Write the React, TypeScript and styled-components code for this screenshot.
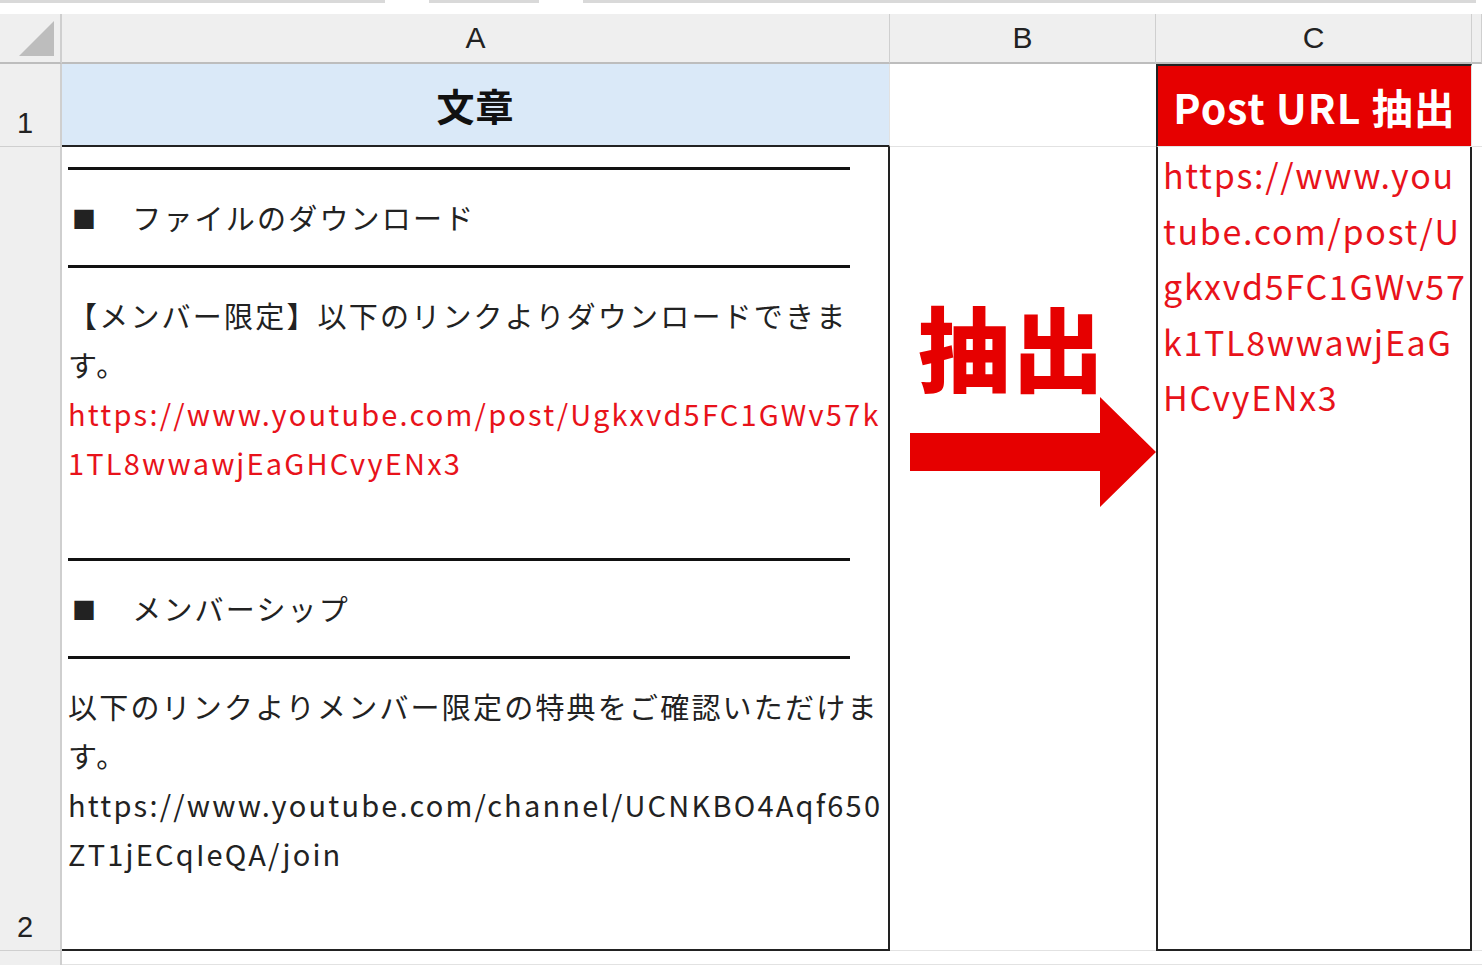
import React from "react";
import styled, { createGlobalStyle } from "styled-components";

const Global = createGlobalStyle`
  html, body { margin: 0; padding: 0; background: #fff; }
  body { font-family: "Noto Sans CJK JP", "Noto Sans", sans-serif; }
`;

const Page = styled.div`
  width: 1482px;
  height: 965px;
  overflow: hidden;
  display: flex;
  flex-direction: column;
  background: #fff;
`;

const TopStrip = styled.div`
  height: 14px;
  background: #fff;
  display: flex;
  gap: 44px;
  & > span { height: 3px; background: #d9d9d9; }
`;

const Grid = styled.div`
  display: grid;
  grid-template-columns: 62px 828px 266px 316px 10px;
  grid-template-rows: 50px 83px 804px 14px;
`;

const Corner = styled.div`
  background: #efefef;
  border-right: 2px solid #cfcfcf;
  border-bottom: 2px solid #bdbdbd;
  position: relative;
  &::after {
    content: "";
    position: absolute;
    right: 6px;
    bottom: 6px;
    border-style: solid;
    border-width: 0 0 35px 35px;
    border-color: transparent transparent #bdbdbd transparent;
  }
`;

const ColHead = styled.div`
  background: #efefef;
  border-right: 1px solid #cfcfcf;
  border-bottom: 2px solid #bdbdbd;
  display: flex;
  align-items: center;
  justify-content: center;
  font-family: "Liberation Sans", sans-serif;
  font-size: 30px;
  color: #222;
`;

const RowHead = styled.div`
  background: #efefef;
  border-right: 2px solid #cfcfcf;
  border-bottom: 1px solid #cfcfcf;
  display: flex;
  align-items: flex-end;
  justify-content: center;
  padding-right: 10px;
  padding-bottom: 6px;
  font-family: "Liberation Sans", sans-serif;
  font-size: 29px;
  color: #222;
`;

const Cell = styled.div<{ $bg?: string; $box?: boolean }>`
  background: ${(p) => p.$bg || "#fff"};
  border-right: ${(p) => (p.$box ? "2px solid #222" : "1px solid #e2e2e2")};
  border-bottom: ${(p) => (p.$box ? "2px solid #222" : "1px solid #e2e2e2")};
  position: relative;
  box-sizing: border-box;
`;

const HeadCell = styled(Cell)<{ $color: string; $size: number }>`
  display: flex;
  align-items: center;
  justify-content: center;
  font-weight: 700;
  color: ${(p) => p.$color};
  font-size: ${(p) => p.$size}px;
  letter-spacing: 1px;
  border-left: ${(p) => (p.$color === "#fff" ? "2px solid #222" : "none")};
  border-top: ${(p) => (p.$color === "#fff" ? "2px solid #222" : "none")};
`;

const ACell = styled(Cell)`
  padding: 20px 0 0 6px;
  font-size: 29px;
  color: #222;
  line-height: 49px;
  letter-spacing: 2.2px;
`;

const Rule = styled.div`
  width: 782px;
  height: 3px;
  background: #111;
`;

const Heading = styled.div`
  height: 95px;
  display: flex;
  align-items: center;
  gap: 34px;
  padding-left: 4px;
  & b { font-weight: 400; font-size: 24px; }
`;

const Para = styled.div<{ $h: number }>`
  height: ${(p) => p.$h}px;
  padding-top: 23px;
  box-sizing: border-box;
  white-space: nowrap;
`;

const Red = styled.span`
  color: #e8121a;
`;

const BCell = styled(Cell)`
  border-right: none;
  display: flex;
  flex-direction: column;
  align-items: flex-start;
  padding: 152px 0 0 20px;
`;

const BigWord = styled.div`
  font-size: 92px;
  font-weight: 900;
  color: #e60000;
  line-height: 1;
  letter-spacing: 2px;
  margin-left: 8px;
`;

const Arrow = styled.svg`
  margin-top: 6px;
  display: block;
`;

const CCell = styled(Cell)`
  border-left: 2px solid #222;
  padding: 0 0 0 5px;
  font-size: 34px;
  line-height: 55.5px;
  color: #e8121a;
  white-space: nowrap;
  letter-spacing: 1.7px;
`;

const Filler = styled.div`
  background: #fff;
  border-bottom: 1px solid #e2e2e2;
`;

export default function App() {
  return (
    <Page>
      <Global />
      <TopStrip>
        <span style={{ width: 385 }} />
        <span style={{ width: 110 }} />
        <span style={{ width: 893 }} />
      </TopStrip>
      <Grid>
        <Corner />
        <ColHead>A</ColHead>
        <ColHead>B</ColHead>
        <ColHead>C</ColHead>
        <ColHead />

        <RowHead>1</RowHead>
        <HeadCell $bg="#dae9f8" $color="#111" $size={38} style={{ borderBottom: "2px solid #222" }}>文章</HeadCell>
        <Cell style={{ borderRight: "none" }} />
        <HeadCell $bg="#e60000" $color="#fff" $size={41}>Post URL 抽出</HeadCell>
        <Filler />

        <RowHead>2</RowHead>
        <ACell $box>
          <Rule />
          <Heading><b>■</b><span>ファイルのダウンロード</span></Heading>
          <Rule />
          <Para $h={290}>
            【メンバー限定】以下のリンクよりダウンロードできま<br />
            す。<br />
            <Red>https://www.youtube.com/post/Ugkxvd5FC1GWv57k</Red><br />
            <Red>1TL8wwawjEaGHCvyENx3</Red>
          </Para>
          <Rule />
          <Heading><b>■</b><span>メンバーシップ</span></Heading>
          <Rule />
          <Para $h={250}>
            以下のリンクよりメンバー限定の特典をご確認いただけま<br />
            す。<br />
            https://www.youtube.com/channel/UCNKBO4Aqf650<br />
            ZT1jECqIeQA/join
          </Para>
        </ACell>
        <BCell>
          <BigWord>抽出</BigWord>
          <Arrow width="246" height="110" viewBox="0 0 246 110">
            <polygon points="0,36 190,36 190,0 246,55 190,110 190,74 0,74" fill="#e60000" />
          </Arrow>
        </BCell>
        <CCell $box>
          https://www.you<br />
          tube.com/post/U<br />
          gkxvd5FC1GWv57<br />
          k1TL8wwawjEaG<br />
          HCvyENx3
        </CCell>
        <Filler />

        <RowHead style={{ borderBottom: "none" }} />
        <Filler />
        <Filler />
        <Filler />
        <Filler />
      </Grid>
    </Page>
  );
}
